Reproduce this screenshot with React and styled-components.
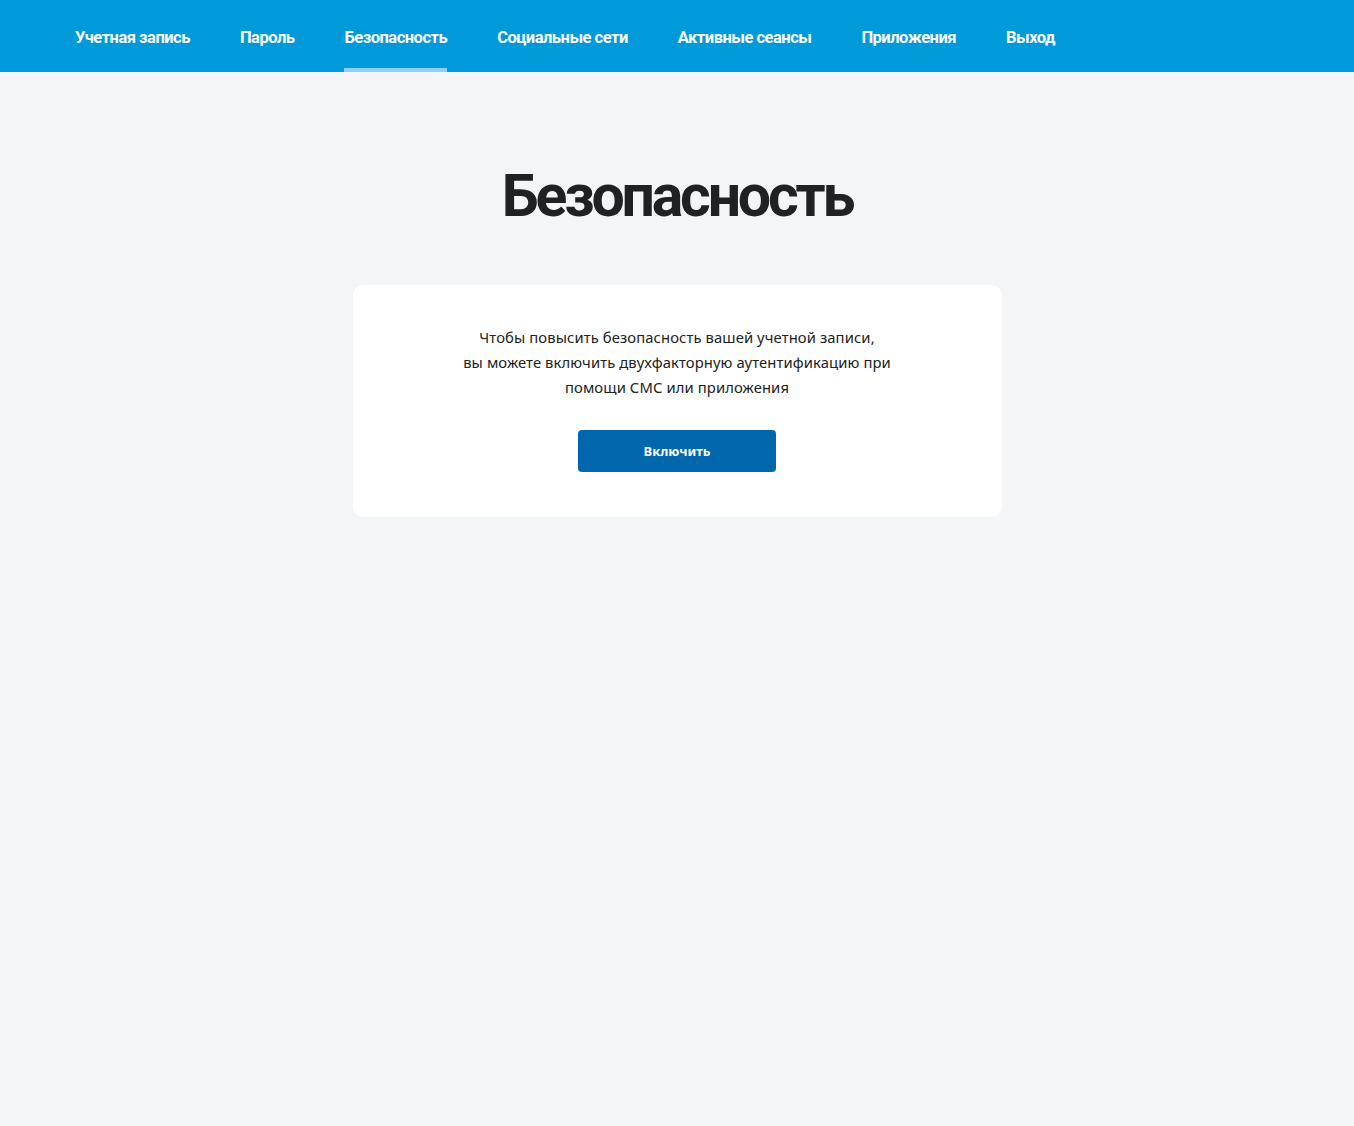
import React from "react";
import styled, { createGlobalStyle } from "styled-components";

const GlobalStyle = createGlobalStyle`
  html, body {
    margin: 0;
    padding: 0;
    background: #f4f5f7;
    font-family: "Noto Sans", "Open Sans", sans-serif;
  }
`;

const navItems = [
  "Учетная запись",
  "Пароль",
  "Безопасность",
  "Социальные сети",
  "Активные сеансы",
  "Приложения",
  "Выход",
];

const App = () => {
  return (
    <Page>
      <GlobalStyle />
      <Header>
        <Nav>
          {navItems.map((item) => (
            <NavItem key={item} active={item === "Безопасность"}>
              {item}
            </NavItem>
          ))}
        </Nav>
      </Header>
      <Main>
        <Title>Безопасность</Title>
        <Card>
          <Description>
            Чтобы повысить безопасность вашей учетной записи,
            <br />
            вы можете включить двухфакторную аутентификацию при
            <br />
            помощи СМС или приложения
          </Description>
          <Button>Включить</Button>
        </Card>
      </Main>
    </Page>
  );
};

export default App;

const Page = styled.div`
  min-height: 1126px;
  background: #f4f5f7;
`;

const Header = styled.header`
  height: 72px;
  background: #009ada;
`;

const Nav = styled.nav`
  display: flex;
  height: 100%;
  padding-left: 75px;
  gap: 50px;
`;

const NavItem = styled.a`
  position: relative;
  display: flex;
  align-items: center;
  height: 100%;
  color: #fff;
  font-family: "Roboto", sans-serif;
  font-weight: 700;
  font-size: 16.5px;
  letter-spacing: -0.5px;
  padding-top: 3px;
  box-sizing: border-box;
  cursor: pointer;

  &::after {
    content: "";
    position: absolute;
    left: 0;
    right: 0;
    bottom: 0;
    height: 4px;
    background: ${(p) => (p.active ? "#8dd0ef" : "transparent")};
  }
`;

const Main = styled.main`
  display: flex;
  flex-direction: column;
  align-items: center;
  padding-top: 91px;
`;

const Title = styled.h1`
  margin: 0 0 56px;
  font-family: "Roboto", sans-serif;
  font-weight: 700;
  font-size: 59px;
  line-height: 66px;
  letter-spacing: -3.2px;
  color: #202124;
`;

const Card = styled.section`
  width: 649px;
  height: 232px;
  box-sizing: border-box;
  padding-top: 40px;
  background: #fff;
  border-radius: 10px;
  display: flex;
  flex-direction: column;
  align-items: center;
`;

const Description = styled.p`
  margin: 0 0 30px;
  font-family: "Noto Sans", sans-serif;
  font-size: 14.8px;
  line-height: 25px;
  letter-spacing: 0.1px;
  color: #222;
  text-align: center;
`;

const Button = styled.button`
  width: 198px;
  height: 42px;
  border: none;
  border-radius: 4px;
  background: #0067ac;
  color: #fff;
  font-family: "Noto Sans", sans-serif;
  font-weight: 700;
  font-size: 13px;
  cursor: pointer;
`;
